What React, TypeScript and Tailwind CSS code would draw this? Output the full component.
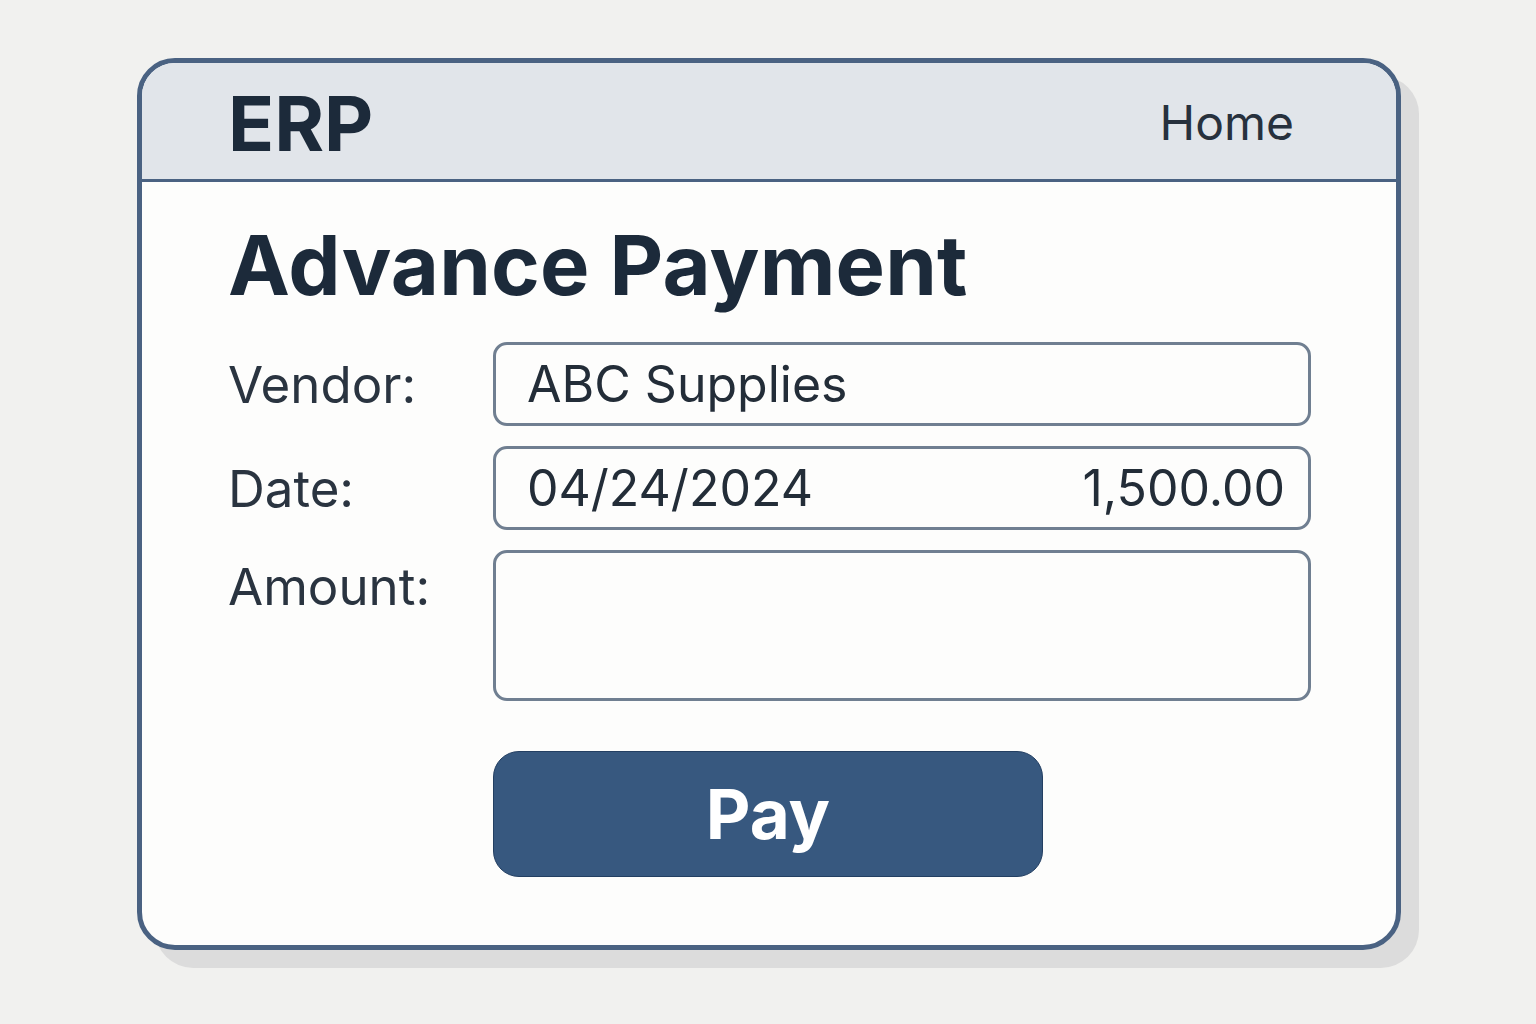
import React from "react";

export default function App() {
  const font = { fontFamily: "Inter, 'Noto Sans', sans-serif" };
  return (
    <div
      className="w-full h-[1024px] bg-[#f1f1ef] pt-[58px] pl-[137px]"
      style={font}
    >
      <div className="w-[1264px] h-[892px] rounded-[38px] border-[5px] border-[#4a6282] bg-[#fdfdfc] shadow-[18px_18px_0_#dcdcdc] overflow-hidden flex flex-col">
        <div className="h-[119px] shrink-0 bg-[#e1e5ea] border-b-[3px] border-[#4a6282] flex items-center justify-between pl-[86px] pr-[102px]">
          <span className="text-[76px] font-bold leading-none text-[#1c2a3a] mt-[4px]">ERP</span>
          <span className="text-[48px] leading-none text-[#27313d] mt-[4px]">Home</span>
        </div>
        <div className="pl-[86px] pt-[42px]">
          <h1 className="text-[83px] font-bold leading-none text-[#1c2a3a] tracking-[0.2px]">
            Advance Payment
          </h1>
          <div className="mt-[35px] grid grid-cols-[265px_818px] gap-y-[20px]">
            <div className="h-[84px] flex items-center text-[51px] leading-none text-[#2a3440]">
              Vendor:
            </div>
            <div className="h-[84px] rounded-[14px] border-[3px] border-[#707f91] flex items-center px-[31px] text-[50px] leading-none text-[#232d38]">
              ABC Supplies
            </div>
            <div className="h-[84px] flex items-center text-[51px] leading-none text-[#2a3440]">
              Date:
            </div>
            <div className="h-[84px] rounded-[14px] border-[3px] border-[#707f91] flex items-center justify-between pl-[31px] pr-[23px] text-[50px] leading-none text-[#232d38]">
              <span>04/24/2024</span>
              <span>1,500.00</span>
            </div>
            <div className="h-[72px] flex items-center text-[51px] leading-none text-[#2a3440]">
              Amount:
            </div>
            <div className="h-[151px] rounded-[14px] border-[3px] border-[#707f91]"></div>
          </div>
          <div className="mt-[50px] ml-[265px] w-[550px] h-[126px] rounded-[26px] bg-[#37587f] border border-[#233f62] flex items-center justify-center">
            <span className="text-[69px] font-bold leading-none text-white">Pay</span>
          </div>
        </div>
      </div>
    </div>
  );
}
